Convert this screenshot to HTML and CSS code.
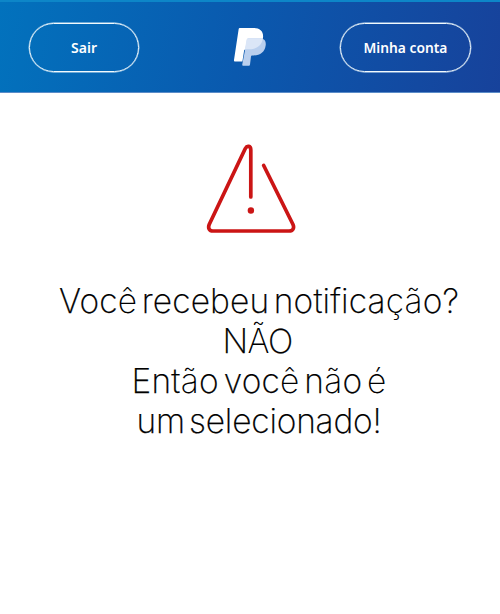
FILE: index.html
```html
<!DOCTYPE html>
<html lang="pt-BR">
<head>
<meta charset="utf-8">
<title>PayPal</title>
<link rel="stylesheet" href="styles.css">
</head>
<body>
<header class="topbar">
  <button class="pill pill-exit">Sair</button>
  <svg class="logo" viewBox="0 0 34 40" width="34" height="40" aria-hidden="true">
    <path fill="#fff" d="M7.200 1H20.500C27 1 30.800 4.500 30 10.500C29 18 24 22.300 16.500 22.300H13.200C11.800 22.300 11.200 22.900 11 24.200L9.400 34.500H2.200C1.200 34.500.9 34 1 33.100L5.600 2.400C5.700 1.500 6.300 1 7.200 1Z"/>
    <path fill="#b9cfee" d="M13.700 14.500C13.800 13.700 14.300 11.300 15.200 11.300H25.500C30.700 11.300 33.300 13.300 32.700 18.300C31.800 25.300 27.200 28.400 20.800 28.400H19.300C18.500 28.400 18.100 28.800 18 29.500L17 37.400C16.900 38.300 16.500 38.700 15.600 38.700H10.400C9.500 38.700 9.100 38.200 9.300 37.300Z"/>
    <path fill="#dbe6f7" d="M13.400 13.500C13.600 12 14.300 11.300 15.200 11.300H25.500C27.300 11.300 28.700 11.500 29.800 12.100C28.600 18.600 23.700 22.300 16.500 22.300H13.200C12.500 22.300 12.200 22.500 11.800 22.900Z"/>
  </svg>
  <button class="pill pill-account">Minha conta</button>
</header>
<main class="notice">
  <svg class="warning" viewBox="0 0 92 92" width="92" height="92" aria-hidden="true">
    <path d="M45.800 55V8C45.800 3.700 42 3.300 40.300 6.500L4.200 82.500C2.800 86 4.200 89 8 89H84C88 89 89.500 86 88 82.500L58.700 23.500" fill="none" stroke="#cb1515" stroke-width="3.700" stroke-linecap="round" stroke-linejoin="round"/>
    <circle cx="45.900" cy="68.500" r="3.200" fill="#cb1515"/>
  </svg>
  <h1 class="message">
    <span class="line line-1">Voc<i>ê</i> recebeu notifica<i>çã</i>o?</span>
    <span class="line line-2">N<i>Ã</i>O</span>
    <span class="line line-3">Ent<i>ã</i>o voc<i>ê</i> n<i>ã</i>o <i>é</i></span>
    <span class="line line-4">um selecionado!</span>
  </h1>
</main>
</body>
</html>
```
FILE: styles.css
```css
* { box-sizing: border-box; }
body { margin: 0; background: #fff; color: #111; font-family: Inter, "Noto Sans", sans-serif; }
.topbar {
  height: 93px;
  padding: 21px 29px 20px;
  border-top: 2px solid #0d86c8;
  border-bottom: 1px solid #5b8cc8;
  display: grid;
  grid-template-columns: 110px 1fr 131px;
  align-items: center;
  background: linear-gradient(100deg, #0272bd 0%, #0a59ae 48%, #17429b 100%);
}
.pill {
  height: 49px;
  padding: 0;
  border: 1px solid #f2fafd;
  box-shadow: 0 0 0 0.400px #d5eaf7;
  border-radius: 25px;
  background: transparent;
  color: #fff;
  font: 600 14px/1 "Noto Sans", sans-serif;
}
.pill-account { font-size: 13.800px; }
.logo { justify-self: center; margin: -2px 0 0 20px; }
.notice { display: flex; flex-direction: column; align-items: center; padding-top: 49px; }
.warning { margin-left: 2px; }
.message {
  margin: 47px 0 0 18px;
  color: #000;
  font-size: 33.500px;
  font-weight: 200;
  line-height: 40px;
  word-spacing: -5px;
  text-align: center;
  -webkit-text-stroke: 0.250px #000;
}
.message i { font-style: normal; -webkit-text-stroke: 0; }
.line { display: block; white-space: nowrap; }
.line-1 { letter-spacing: 0.150px; }
.line-2 { margin-right: 3px; letter-spacing: -0.700px; }
.line-3 { letter-spacing: 0.250px; }
.line-4 { letter-spacing: -0.200px; }
```
